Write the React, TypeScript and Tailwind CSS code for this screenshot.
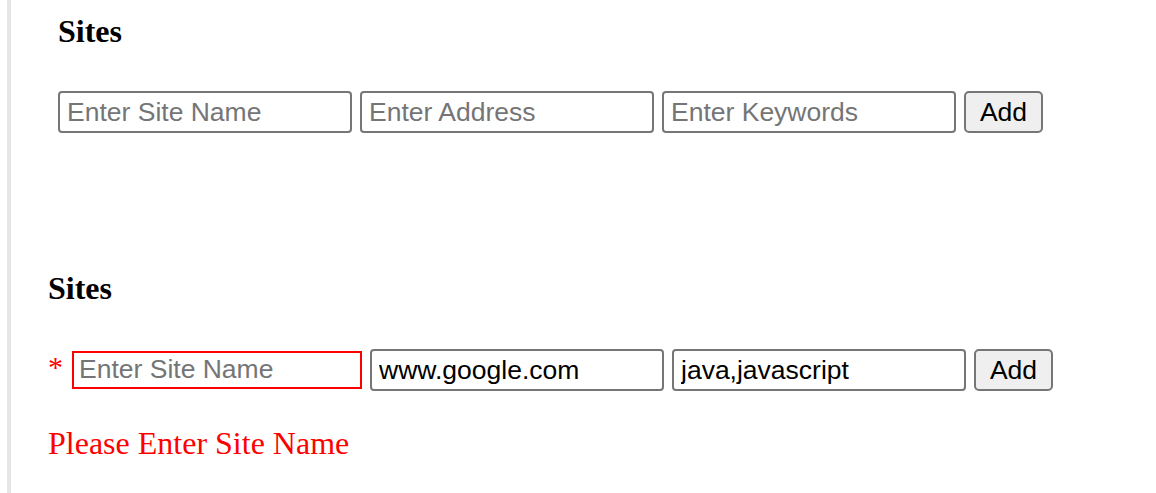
import React from "react";

const FIELDS = [
  { placeholder: "Enter Site Name", value: "" },
  { placeholder: "Enter Address", value: "www.google.com" },
  { placeholder: "Enter Keywords", value: "java,javascript" },
];

const inputBase =
  "h-[42px] w-[294px] rounded-[4px] border-2 border-[#767676] bg-white pl-[7px] pr-[4px] text-[26.5px] text-black outline-none placeholder:text-[#757575] font-['Liberation_Sans',Arial,sans-serif]";

function AddButton() {
  return (
    <button className="h-[42px] w-[79px] rounded-[5px] border-2 border-[#767676] bg-[#efefef] text-[26.5px] text-black font-['Liberation_Sans',Arial,sans-serif]">
      Add
    </button>
  );
}

function Heading() {
  return (
    <h3 className="text-[32px] font-bold leading-none text-black font-['Liberation_Serif','Times_New_Roman',serif]">
      Sites
    </h3>
  );
}

export default function App() {
  return (
    <div className="h-screen w-full bg-white">
      <div className="ml-[7px] h-full border-l-4 border-[#e6e6e6]">
        {/* Empty form */}
        <section className="pl-[47px] pt-[15px]">
          <Heading />
          <div className="mt-[44px] flex items-center gap-2">
            {FIELDS.map((f) => (
              <input key={f.placeholder} placeholder={f.placeholder} className={inputBase} readOnly />
            ))}
            <AddButton />
          </div>
        </section>

        {/* Form with validation error */}
        <section className="pl-[37px] pt-[139px]">
          <Heading />
          <div className="mt-[45px] flex items-center">
            <span className="w-[24px] text-[30px] leading-none text-[#ff0000] font-['Liberation_Serif','Times_New_Roman',serif] -mt-[6px]">
              *
            </span>
            <div className="flex items-center gap-2">
              {FIELDS.map((f, i) => (
                <input
                  key={f.placeholder}
                  placeholder={f.placeholder}
                  defaultValue={f.value}
                  readOnly
                  className={
                    i === 0
                      ? "h-[38px] w-[290px] rounded-none border-2 border-[#ff0000] bg-white pl-[5px] text-[26.5px] text-black outline-none placeholder:text-[#757575] font-['Liberation_Sans',Arial,sans-serif]"
                      : inputBase
                  }
                />
              ))}
              <AddButton />
            </div>
          </div>
          <p className="mt-[36px] text-[32px] leading-none text-[#ff0000] font-['Liberation_Serif','Times_New_Roman',serif]">
            Please Enter Site Name
          </p>
        </section>
      </div>
    </div>
  );
}
